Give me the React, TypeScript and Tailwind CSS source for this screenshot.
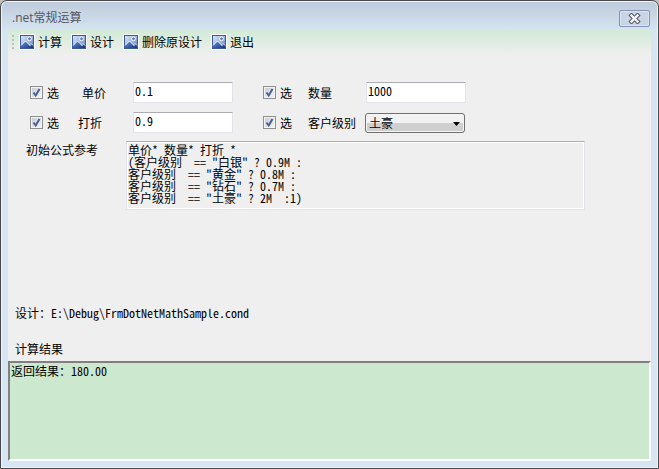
import { useState } from 'react'

const toolbarItems = ['计算', '设计', '删除原设计', '退出']

const formula = `单价* 数量* 打折 *
(客户级别  == "白银" ? 0.9M :
客户级别  == "黄金" ? 0.8M :
客户级别  == "钻石" ? 0.7M :
客户级别  == "土豪" ? 2M  :1)`

const PictureIcon = () => (
    <svg width="16" height="16" viewBox="0 0 16 16" aria-hidden="true">
        <defs>
            <linearGradient id="sky" x1="0" y1="0" x2="1" y2="1">
                <stop offset="0" stopColor="#dbe6f8" />
                <stop offset="0.5" stopColor="#a3b9e2" />
                <stop offset="1" stopColor="#4d6fb6" />
            </linearGradient>
            <linearGradient id="hill" x1="0" y1="0" x2="1" y2="1">
                <stop offset="0" stopColor="#6c8fd2" />
                <stop offset="1" stopColor="#16347f" />
            </linearGradient>
        </defs>
        <rect width="16" height="16" fill="#fff" />
        <rect x="1.5" y="1.5" width="13" height="13" fill="url(#sky)" stroke="#3a5ba3" />
        <path d="M2 11.5l4.5-4.5 4 4 1.5-1.5 2 2V14H2z" fill="url(#hill)" />
        <path d="M2 11.5l4.5-4.5 5 5M10.5 11l1.5-1.5 2 2" fill="none" stroke="#eef3fc" />
        <circle cx="10.5" cy="4.8" r="1.9" fill="#5b7fc6" stroke="#fff" />
    </svg>
)

const CheckField = ({ id }: { id: string }) => {
    const [checked, setChecked] = useState(true)

    return (
        <label htmlFor={id} className="flex items-center gap-1">
            <span className="relative flex">
                <input
                    id={id}
                    type="checkbox"
                    checked={checked}
                    onChange={(e) => setChecked(e.target.checked)}
                    className="peer appearance-none w-[13px] h-[13px] border border-[#8e8f8f] bg-linear-to-br from-[#c5cad1] to-[#f6f6f6] outline outline-1 -outline-offset-2 outline-[#f4f4f4]"
                />
                <svg className="absolute inset-0 pointer-events-none hidden peer-checked:block" width="13" height="13" viewBox="0 0 13 13">
                    <path d="M3.5 6.5l2.2 3L9.5 3" fill="none" stroke="#4a5f97" strokeWidth="2" />
                </svg>
            </span>
            选
        </label>
    )
}

const inputClass = 'w-[100px] h-[21px] px-[1px] pb-1 bg-white border border-[#e2e3ea] border-t-[#abadb3] rounded-[1px] outline-none'

const App = () => {
    const [level, setLevel] = useState('土豪')

    return (
        <div className="bg-[#bfbfbf] min-h-screen flex flex-col text-black text-[12px] leading-[12px] font-['Noto_Sans_Mono_CJK_SC','Liberation_Mono','Noto_Sans_CJK_SC',monospace]">
            <div className="flex-1 flex flex-col border border-[#4b484c] rounded-t-[7px] bg-[#d7e4f2] shadow-[inset_0_0_0_1px_#eef3f9] px-[7px] pb-[7px] bg-linear-to-b from-[#bdcad9] to-[#d7e4f2] to-[30px]">
                {/* Title bar */}
                <header className="h-[29px] flex items-start justify-between pl-1 pr-[1px]">
                    <h1 className="pt-[11px] text-[#52565c] font-['Open_Sans','Noto_Sans_CJK_SC',sans-serif]">.net常规运算</h1>
                    <button aria-label="关闭" className="mt-[9px] w-[31px] h-[17px] flex items-center justify-center border border-[#8592b3] rounded-[2px] bg-[#c8d5e5] shadow-[inset_0_0_0_1px_#d9e4f0]">
                        <svg width="13" height="11" viewBox="0 0 13 11">
                            <path d="M3.5 2.5l6 6M9.5 2.5l-6 6" stroke="#535666" strokeWidth="4.4" strokeLinecap="square" />
                            <path d="M3.5 2.5l6 6M9.5 2.5l-6 6" stroke="#f5f5f5" strokeWidth="2.4" strokeLinecap="square" />
                        </svg>
                    </button>
                </header>

                <main className="flex-1 flex flex-col bg-[#efefef]">
                    <nav className="h-[25px] flex items-center pl-1 pb-[2px] gap-[9px] bg-linear-to-b from-[#d2ead6] to-[#efefef] font-['Noto_Sans_CJK_SC',sans-serif]">
                        <span className="-mr-1 w-[2px] h-[14px] bg-[repeating-linear-gradient(to_bottom,#b5c6b8_0_2px,transparent_2px_4px)]"></span>
                        {toolbarItems.map((item) => (
                            <button key={item} className="flex items-center gap-[3px]">
                                <PictureIcon />
                                {item}
                            </button>
                        ))}
                    </nav>

                    {/* Parameters */}
                    <form className="pt-7 pl-[22px] flex flex-col gap-[9px]">
                        <div className="flex items-center h-[21px] pb-[2px]">
                            <div className="w-12"><CheckField id="usePrice" /></div>
                            <label htmlFor="price" className="w-[55px] pl-1">单价</label>
                            <input id="price" defaultValue="0.1" className={inputClass} />
                            <div className="ml-[30px] w-[45px]"><CheckField id="useCount" /></div>
                            <label htmlFor="count" className="w-[58px]">数量</label>
                            <input id="count" defaultValue="1000" className={inputClass} />
                        </div>
                        <div className="flex items-center h-[21px] pb-[2px]">
                            <div className="w-12"><CheckField id="useDiscount" /></div>
                            <label htmlFor="discount" className="w-[55px]">打折</label>
                            <input id="discount" defaultValue="0.9" className={inputClass} />
                            <div className="ml-[30px] w-[45px]"><CheckField id="useLevel" /></div>
                            <label htmlFor="level" className="w-[57px]">客户级别</label>
                            <div className="relative">
                                <select
                                    id="level"
                                    value={level}
                                    onChange={(e) => setLevel(e.target.value)}
                                    className="block appearance-none w-[100px] h-5 pl-[3px] border border-[#707070] rounded-[3px] bg-linear-to-b from-[#f2f2f2] from-50% to-[#cfcfcf] to-50% shadow-[inset_0_0_0_1px_#f5f5f5]"
                                >
                                    <option>白银</option>
                                    <option>黄金</option>
                                    <option>钻石</option>
                                    <option>土豪</option>
                                </select>
                                <svg className="absolute right-[5px] top-[9px] pointer-events-none" width="7" height="4" viewBox="0 0 7 4">
                                    <path d="M0 0h7L3.5 4z" fill="#000" />
                                </svg>
                            </div>
                        </div>
                    </form>

                    <div className="flex items-start pt-[7px] pl-[18px]">
                        <label htmlFor="formula" className="w-[100px] pt-[3px]">初始公式参考</label>
                        <textarea
                            id="formula"
                            readOnly
                            value={formula}
                            className="w-[459px] h-[69px] px-[1px] pt-[2px] resize-none overflow-hidden whitespace-pre border border-[#e2e3ea] border-t-[#abadb3] shadow-[inset_0_0_0_1px_#fff] outline-none"
                        />
                    </div>

                    <p className="pt-[97px] pl-[7px]">设计：E:\Debug\FrmDotNetMathSample.cond</p>
                    <label htmlFor="result" className="pt-6 pb-[6px] pl-[7px]">计算结果</label>
                    <textarea
                        id="result"
                        readOnly
                        value="返回结果：180.00"
                        className="flex-1 w-full min-h-[60px] px-[1px] pt-[2px] resize-none bg-[#cce8cf] border-2 border-t-[#808080] border-l-[#808080] border-r-white border-b-white outline-none"
                    />
                </main>
            </div>
        </div>
    )
}

export default App
